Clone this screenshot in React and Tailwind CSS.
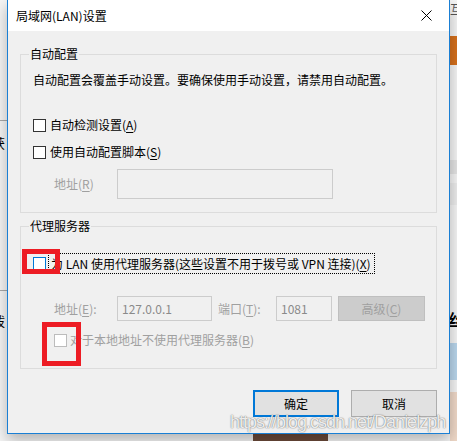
import React from "react";

const font = { fontFamily: '"Noto Sans CJK SC", "Microsoft YaHei", sans-serif' };

function Box({ disabled, focus }) {
  return (
    <span
      className={
        "inline-block w-[13px] h-[13px] shrink-0 border " +
        (disabled
          ? "border-[#bcbcbc] bg-white"
          : focus
          ? "border-[#0078d7] bg-white"
          : "border-[#333333] bg-white")
      }
    />
  );
}

function U({ children }) {
  return <span className="underline underline-offset-2">{children}</span>;
}

export default function App() {
  return (
    <div
      className="relative w-[457px] h-[441px] overflow-hidden bg-[#f5f5f5] text-[12px] text-black"
      style={font}
    >
      {/* desktop background fragments */}
      <div className="absolute left-0 top-[120px] w-[7px] h-px bg-[#a8a8a8]" />
      <div className="absolute left-0 top-[290px] w-[7px] h-px bg-[#a8a8a8]" />
      <div className="absolute left-[-8px] top-[135px] text-[13px] leading-[16px]">获</div>
      <div className="absolute left-[-8px] top-[313px] text-[13px] leading-[16px]">拨</div>
      <div className="absolute left-[450px] top-[2px] text-[12px] leading-[14px] text-[#555]">互</div>
      <div className="absolute left-[450px] top-[36px] w-[7px] h-[29px] bg-[#d5701c]" />
      <div className="absolute left-[450px] top-[160px] w-[7px] h-[14px] bg-[#e4e4e4]" />
      <div className="absolute left-[450px] top-[183px] w-[7px] h-[22px] bg-[#ececec]" />
      <div className="absolute left-[448px] top-[309px] text-[16px] leading-[20px] font-bold">丝</div>
      <div className="absolute left-[450px] top-[343px] w-[7px] h-[37px] bg-[#b9d6ec]" />
      <div className="absolute left-[450px] top-[392px] w-[7px] h-[49px] bg-[#f0d9c8]" />
      <div className="absolute left-[253px] top-[432px] w-[75px] h-[9px] bg-[#6b4a3a]" />

      {/* dialog window */}
      <div className="absolute left-[7px] top-0 w-[443px] h-[434px] flex flex-col border-x border-b border-[#1a7fd4] bg-[#f0f0f0] shadow-[0_6px_14px_rgba(0,0,0,0.28)]">
        {/* title bar */}
        <div className="h-[31px] shrink-0 bg-white flex items-center justify-between">
          <span className="pl-[8px] leading-[16px]">局域网(LAN)设置</span>
          <span className="w-[46px] h-[31px] flex items-center justify-center">
            <svg width="11" height="11" viewBox="0 0 11 11">
              <path d="M0.5 0.5 L10.5 10.5 M10.5 0.5 L0.5 10.5" stroke="#000" strokeWidth="1" fill="none" />
            </svg>
          </span>
        </div>

        {/* body */}
        <div className="flex-1 flex flex-col px-[12px] pt-[23px]">
          {/* group 1 */}
          <div className="relative border border-[#dcdcdc] flex flex-col pb-[13px]">
            <span className="absolute left-[8px] top-[-9px] px-[1px] bg-[#f0f0f0] leading-[16px]">自动配置</span>
            <div className="mt-[17px] h-[16px] leading-[16px] pl-[12px]">
              自动配置会覆盖手动设置。要确保使用手动设置，请禁用自动配置。
            </div>
            <div className="mt-[29px] h-[16px] flex items-center pl-[12px] gap-[4px]">
              <Box />
              <span className="leading-[16px]">
                自动检测设置(<U>A</U>)
              </span>
            </div>
            <div className="mt-[11px] h-[16px] flex items-center pl-[12px] gap-[4px]">
              <Box />
              <span className="leading-[16px]">
                使用自动配置脚本(<U>S</U>)
              </span>
            </div>
            <div className="mt-[9px] h-[30px] flex items-center pl-[33px]">
              <span className="w-[63px] text-[#a0a0a0] leading-[16px]">
                地址(<U>R</U>)
              </span>
              <span className="w-[216px] h-[30px] border border-[#cccccc] bg-[#f0f0f0]" />
            </div>
          </div>

          {/* group 2 */}
          <div className="relative mt-[13px] border border-[#dcdcdc] flex flex-col pb-[20px]">
            <span className="absolute left-[8px] top-[-9px] px-[1px] bg-[#f0f0f0] leading-[16px]">代理服务器</span>
            <div className="mt-[26px] h-[21px] flex items-center pl-[12px] gap-[2px]">
              <Box focus />
              <span className="h-[21px] flex items-center border border-dotted border-black px-[2px] pr-[3px] leading-[16px] whitespace-nowrap">
                为 LAN 使用代理服务器(这些设置不用于拨号或 VPN 连接)(<U>X</U>)
              </span>
            </div>
            <div className="mt-[22px] h-[25px] flex items-center pl-[33px]">
              <span className="w-[63px] text-[#a0a0a0] leading-[16px]">
                地址(<U>E</U>):
              </span>
              <span className="w-[95px] h-[25px] border border-[#cccccc] bg-[#f0f0f0] flex items-center pl-[4px] text-[#8a8a8a]">
                127.0.0.1
              </span>
              <span className="ml-[6px] w-[58px] text-[#a0a0a0] leading-[16px]">
                端口(<U>T</U>):
              </span>
              <span className="w-[56px] h-[25px] border border-[#cccccc] bg-[#f0f0f0] flex items-center pl-[4px] text-[#8a8a8a]">
                1081
              </span>
              <span className="ml-[6px] w-[87px] h-[25px] border border-[#bfbfbf] bg-[#cccccc] flex items-center justify-center text-[#a0a0a0]">
                高级(<U>C</U>)
              </span>
            </div>
            <div className="mt-[11px] h-[16px] flex items-center pl-[33px] gap-[3px]">
              <Box disabled />
              <span className="text-[#a0a0a0] leading-[16px]">
                对于本地地址不使用代理服务器(<U>B</U>)
              </span>
            </div>
          </div>

          {/* buttons */}
          <div className="mt-[21px] flex justify-end gap-[12px]">
            <span className="w-[86px] h-[27px] border-2 border-[#0078d7] bg-[#e1e1e1] flex items-center justify-center">
              确定
            </span>
            <span className="w-[86px] h-[27px] border border-[#adadad] bg-[#e1e1e1] flex items-center justify-center">
              取消
            </span>
          </div>
        </div>
      </div>

      {/* annotations */}
      <div className="absolute left-[22px] top-[249px] w-[38px] h-[25px] border-[5px] border-[#ed1c24]" />
      <div className="absolute left-[42px] top-[322px] w-[39px] h-[44px] border-[5px] border-[#ed1c24]" />

      {/* watermark */}
      <div
        className="absolute left-[230px] top-[411px] text-[18px] leading-[22px] tracking-[-1px] text-[rgba(255,255,255,0.9)] whitespace-nowrap [text-shadow:0_0_1px_rgba(0,0,0,0.55),0_0_2px_rgba(0,0,0,0.25)]"
        style={{ fontFamily: '"Liberation Sans", Arial, sans-serif' }}
      >
        https://blog.csdn.net/Danielzph
      </div>
    </div>
  );
}
